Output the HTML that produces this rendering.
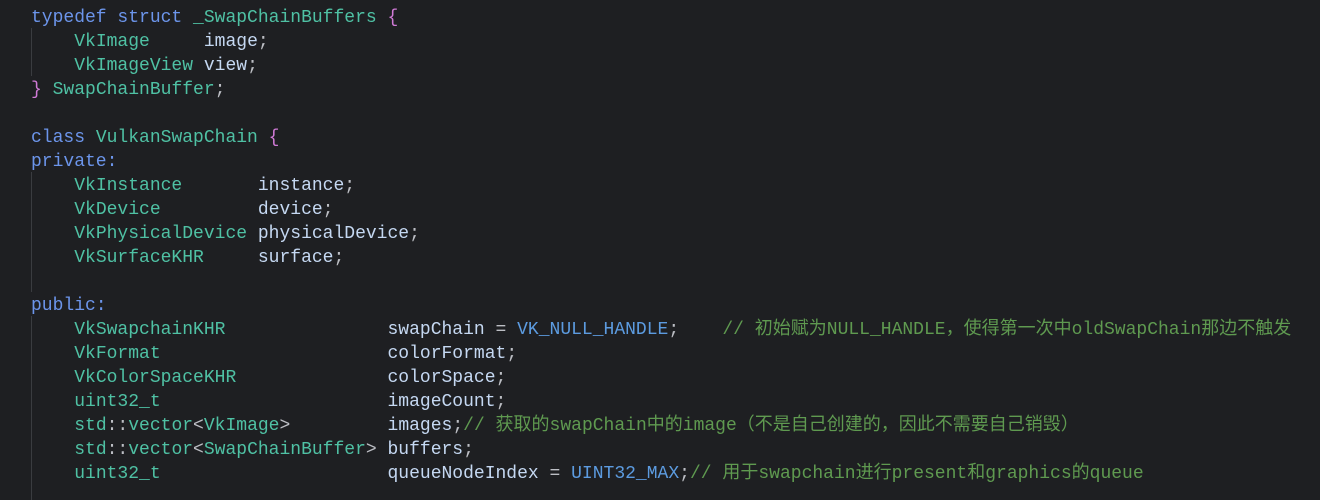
<!DOCTYPE html>
<html><head><meta charset="utf-8"><style>
html,body{margin:0;padding:0;background:#1e1f22;width:1320px;height:500px;overflow:hidden}
.c{position:absolute;left:31px;top:6px;font-family:"Liberation Mono","Noto Sans CJK SC",monospace;font-size:18px;line-height:24px;white-space:pre;color:#bcbec4}
.k{color:#6c95eb}.t{color:#4fc1a4}.f{color:#c5d8f2}.b{color:#d07ad6}.m{color:#5c9be0}
.cm{color:#5f9a50;font-size:18px}.cm i{font-style:normal;font-family:"Liberation Mono",monospace;font-size:18px}
.g{position:absolute;left:31px;width:1px;background:#3a3c40}
</style></head><body>
<div class="g" style="top:28px;height:48px"></div>
<div class="g" style="top:172px;height:120px"></div>
<div class="g" style="top:316px;height:184px"></div>
<div class="c"><span class="k">typedef struct</span> <span class="t">_SwapChainBuffers</span> <span class="b">{</span>
    <span class="t">VkImage</span>     <span class="f">image</span>;
    <span class="t">VkImageView</span> <span class="f">view</span>;
<span class="b">}</span> <span class="t">SwapChainBuffer</span>;

<span class="k">class</span> <span class="t">VulkanSwapChain</span> <span class="b">{</span>
<span class="k">private:</span>
    <span class="t">VkInstance</span>       <span class="f">instance</span>;
    <span class="t">VkDevice</span>         <span class="f">device</span>;
    <span class="t">VkPhysicalDevice</span> <span class="f">physicalDevice</span>;
    <span class="t">VkSurfaceKHR</span>     <span class="f">surface</span>;

<span class="k">public:</span>
    <span class="t">VkSwapchainKHR</span>               <span class="f">swapChain</span> = <span class="m">VK_NULL_HANDLE</span>;    <span class="cm"><i>// </i>初始赋为<i>NULL_HANDLE</i>，使得第一次中<i>oldSwapChain</i>那边不触发</span>
    <span class="t">VkFormat</span>                     <span class="f">colorFormat</span>;
    <span class="t">VkColorSpaceKHR</span>              <span class="f">colorSpace</span>;
    <span class="t">uint32_t</span>                     <span class="f">imageCount</span>;
    <span class="t">std</span>::<span class="t">vector</span>&lt;<span class="t">VkImage</span>&gt;         <span class="f">images</span>;<span class="cm"><i>// </i>获取的<i>swapChain</i>中的<i>image</i>（不是自己创建的，因此不需要自己销毁）</span>
    <span class="t">std</span>::<span class="t">vector</span>&lt;<span class="t">SwapChainBuffer</span>&gt; <span class="f">buffers</span>;
    <span class="t">uint32_t</span>                     <span class="f">queueNodeIndex</span> = <span class="m">UINT32_MAX</span>;<span class="cm"><i>// </i>用于<i>swapchain</i>进行<i>present</i>和<i>graphics</i>的<i>queue</i></span></div>
</body></html>
